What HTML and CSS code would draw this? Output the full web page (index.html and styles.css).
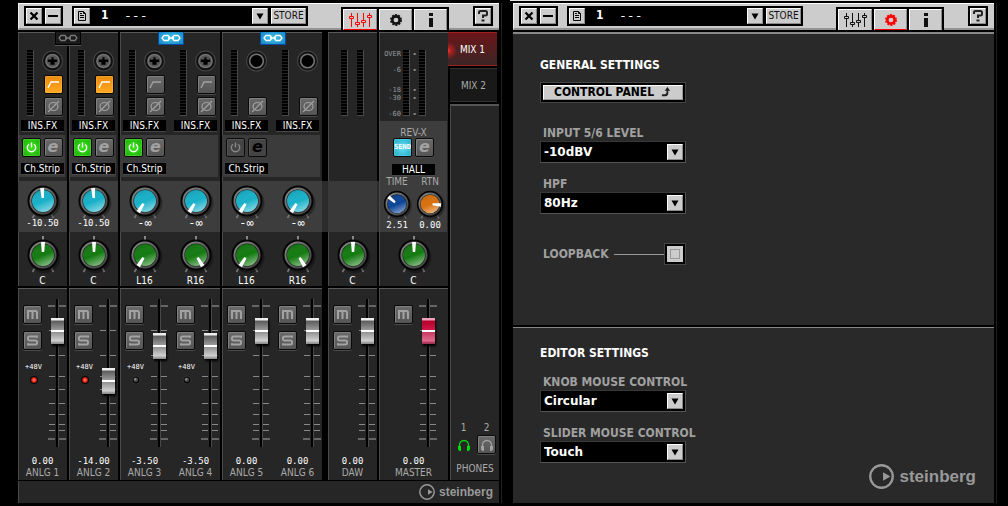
FILE: index.html
```html
<!DOCTYPE html>
<html lang="en">
<head>
<meta charset="utf-8">
<title>Mixer and settings</title>
<link rel="stylesheet" href="styles.css">
</head>
<body>
<svg class="defs" width="0" height="0" aria-hidden="true">
  <defs>
    <linearGradient id="ring" x1="0" y1="0" x2="1" y2="1"><stop offset="0" stop-color="#8c8c8c"/><stop offset="1" stop-color="#3c3c3c"/></linearGradient>
    <linearGradient id="sheen" x1="0.3" y1="0" x2="0.7" y2="1"><stop offset="0" stop-color="#000" stop-opacity=".12"/><stop offset=".5" stop-color="#fff" stop-opacity="0"/><stop offset="1" stop-color="#fff" stop-opacity=".5"/></linearGradient>
    <radialGradient id="glow"><stop offset="0" stop-color="#ff8a70"/><stop offset=".6" stop-color="#f03020"/><stop offset="1" stop-color="#901008"/></radialGradient>
    <symbol id="dial" viewBox="0 0 40 40">
      <path d="M11.5 33.5 9.500 37M28.500 33.500 30.500 37" stroke="#777" stroke-width="1.600"/>
      <circle cx="21.500" cy="22" r="16" fill="#000" opacity=".3"/>
      <circle cx="20" cy="20" r="15.500" fill="#050505"/>
      <circle cx="20" cy="20" r="13.500" fill="url(#ring)"/>
      <circle cx="20" cy="20" r="11.600" fill="#222"/>
      <circle cx="20" cy="20" r="11" fill="currentColor"/>
      <circle cx="20" cy="20" r="11" fill="url(#sheen)"/>
    </symbol>
    <symbol id="needle" viewBox="0 0 40 40"><path d="M18 7h4l-.8 10h-2.400z" fill="#fff"/></symbol>
    <symbol id="link" viewBox="0 0 20 8"><path d="M3 1.500h4l2 2.500-2 2.500H3L1 4zM13 1.500h4L19 4l-2 2.500h-4L11 4zM7 4h6" fill="none" stroke="currentColor" stroke-width="1.300"/></symbol>
    <symbol id="jack" viewBox="0 0 20 20"><circle cx="10" cy="10" r="9.500" fill="#111" stroke="#484848"/><circle cx="10" cy="10" r="7" fill="#707070"/><circle cx="10" cy="10" r="5.500" fill="#555"/><path d="M9 6.500h2v2h3.500v2.500H12v2.500H8V11H5.500V8.500H9z" fill="#000"/></symbol>
    <symbol id="jack-combo" viewBox="0 0 20 20"><circle cx="10" cy="10" r="9.500" fill="#111" stroke="#484848"/><circle cx="10" cy="10" r="6.500" fill="#000" stroke="#747474" stroke-width="1.500"/></symbol>
    <symbol id="hpf" viewBox="0 0 17 17"><path d="M3 12 6 6h8" fill="none" stroke="currentColor" stroke-width="1.400"/></symbol>
    <symbol id="phase" viewBox="0 0 17 17"><ellipse cx="8.500" cy="8.500" rx="4.500" ry="4" fill="none" stroke="currentColor" stroke-width="1.200"/><path d="M3 14 14 3" stroke="currentColor" stroke-width="1.200"/></symbol>
    <symbol id="power" viewBox="0 0 17 17"><path d="M6 5.200a4.200 4.200 0 1 0 5 0M8.500 3.500v5" fill="none" stroke="currentColor" stroke-width="1.400"/></symbol>
    <symbol id="mute" viewBox="0 0 17 17"><path d="M4 13V5h7.500q1.500 0 1.500 1.500V13M8.500 5v8" fill="none" stroke="currentColor" stroke-width="2"/></symbol>
    <symbol id="solo" viewBox="0 0 17 17"><path d="M13 5.800V4.500H5.500q-1.500 0-1.500 1.500v1q0 1.500 1.500 1.500h6q1.500 0 1.500 1.500v1q0 1.500-1.500 1.500H4v-1.300" fill="none" stroke="currentColor" stroke-width="2"/></symbol>
    <symbol id="led-on" viewBox="0 0 10 10"><circle cx="5" cy="5" r="4" fill="#080808"/><circle cx="5" cy="5" r="3" fill="url(#glow)"/></symbol>
    <symbol id="led-off" viewBox="0 0 10 10"><circle cx="5" cy="5" r="4" fill="#080808" stroke="#444" stroke-width=".6"/><circle cx="4.800" cy="4.800" r="2.300" fill="#4c4c4c"/><circle cx="4.200" cy="4.200" r="1" fill="#999"/></symbol>
    <symbol id="rail" viewBox="0 0 18 148">
      <path d="M8 0h2v148H8z" fill="#000"/><path d="M10 0h1v148h-1z" fill="#484848"/>
      <path d="M0 7h7M11 7h7M0 140h7M11 140h7" stroke="#666" stroke-width="2"/>
      <path d="M1 31.500h6M11 31.500h6M1 56.500h6M11 56.500h6M1 77.500h6M11 77.500h6M1 90.500h6M11 90.500h6M1 104.500h6M11 104.500h6M1 115.500h6M11 115.500h6M1 125.500h6M11 125.500h6M1 131.500h6M11 131.500h6" stroke="#888"/>
    </symbol>
    <symbol id="close" viewBox="0 0 16 16"><path d="m4.500 4.500 7 7M11.500 4.500l-7 7" stroke="#000" stroke-width="2.200"/></symbol>
    <symbol id="minimize" viewBox="0 0 16 16"><path d="M3 8h10" stroke="#000" stroke-width="2"/></symbol>
    <symbol id="file" viewBox="0 0 16 16"><path d="M4.500 3.500h5l2 2v7h-7zM9.500 3.500v2h2M6 7.500h4M6 9.500h4M6 5.500h2" fill="none" stroke="#000"/></symbol>
    <symbol id="arrow" viewBox="0 0 16 16"><path d="M4 5h8l-4 7z" fill="#000"/></symbol>
    <symbol id="mixer" viewBox="0 0 24 16"><path d="M3.500 1v14M9.500 1v14M15.500 1v14M21.500 1v14" stroke="currentColor"/><path d="M1.500 4.500h4v2h-4zM7.500 10.500h4v2h-4zM13.500 8.500h4v2h-4zM19.500 3.500h4v2h-4z" fill="#ccc" stroke="currentColor"/></symbol>
    <symbol id="gear" viewBox="0 0 16 16"><circle cx="8" cy="8" r="4.200" fill="none" stroke="currentColor" stroke-width="3"/><circle cx="8" cy="8" r="5.900" fill="none" stroke="currentColor" stroke-width="1.800" stroke-dasharray="2.300 1.407"/></symbol>
    <symbol id="info" viewBox="0 0 12 14"><path d="M4 0h4v3H4zM4 5h4v9H4z" fill="currentColor"/></symbol>
    <symbol id="help" viewBox="0 0 16 16"><path d="M4 6V4.500q0-1.500 1.500-1.500h5Q12 3 12 4.500V6q0 1.500-1.500 1.500H8V10" fill="none" stroke="#222" stroke-width="2"/><path d="M6.500 11.500h3v2h-3z" fill="#222"/></symbol>
    <symbol id="phones" viewBox="0 0 14 14"><path d="M2.500 9V7a4.500 4.500 0 0 1 9 0v2" fill="none" stroke="currentColor" stroke-width="1.300"/><path d="M1 8h3v5H2.500L1 11.500zM13 8h-3v5h1.500l1.500-1.500z" fill="currentColor"/></symbol>
    <symbol id="brand" viewBox="0 0 24 24"><circle cx="12" cy="12" r="10.800" fill="none" stroke="currentColor" stroke-width="2.200"/><path d="M13.500 8v8l7-4z" fill="currentColor"/></symbol>
    <symbol id="jump" viewBox="0 0 12 12"><path d="M1 10h4q3 0 3-4V4h2L7 0 4 4h2v2q0 2-2 2H1z" fill="#222"/></symbol>
  </defs>
</svg>

<main class="window">
  <header class="bar">
    <div class="well"><button class="key" aria-label="Close"><svg><use href="#close"/></svg></button><button class="key" aria-label="Minimize"><svg><use href="#minimize"/></svg></button></div>
    <div class="well preset"><button class="key" aria-label="Library"><svg><use href="#file"/></svg></button><span class="number">1</span><span class="pick"><select aria-label="Preset"><option>---</option></select><svg class="key"><use href="#arrow"/></svg></span><button class="key store">STORE</button></div>
    <nav class="tabs"><button class="tab on" aria-label="Mixer"><svg class="wide"><use href="#mixer"/></svg></button><button class="tab" aria-label="Settings"><svg><use href="#gear"/></svg></button><button class="tab" aria-label="Information"><svg><use href="#info"/></svg></button></nav>
    <div class="well"><button class="key" aria-label="Help"><svg><use href="#help"/></svg></button></div>
  </header>

  <div class="mixer">
    <section class="column linked">
      <button class="link between" aria-label="Link 1 and 2"><svg><use href="#link"/></svg></button>
      <div class="upper">
        <div class="channel">
          <div class="input"><i class="meter"></i><div class="stack"><svg class="jack"><use href="#jack"/></svg><button class="btn amber" aria-label="HPF"><svg><use href="#hpf"/></svg></button><button class="btn" aria-label="Phase"><svg><use href="#phase"/></svg></button></div></div>
          <button class="slot">INS.FX</button>
          <div class="insert"><div class="pair"><button class="btn green" aria-label="Insert on"><svg><use href="#power"/></svg></button><button class="btn edit">e</button></div><button class="slot">Ch.Strip</button></div>
          <div class="send"><label class="knob teal"><svg><use href="#dial"/><use href="#needle" transform="rotate(-4 20 20)"/></svg><input type="range" aria-label="Send 1" value="49"></label><output>-10.50</output></div>
          <div class="pan"><label class="knob leaf"><svg><path class="tick" d="M20 1v4"/><use href="#dial"/><use href="#needle"/></svg><input type="range" aria-label="Pan 1"></label><output>C</output></div>
        </div>
      </div>
      <div class="lower">
        <div class="channel">
          <div class="strip"><div class="switches"><button class="btn" aria-label="Mute 1"><svg><use href="#mute"/></svg></button><button class="btn" aria-label="Solo 1"><svg><use href="#solo"/></svg></button><span class="phantom">+48V</span><svg class="led"><use href="#led-on"/></svg></div><label class="fader"><svg><use href="#rail"/></svg><input type="range" aria-label="Level 1" max="122" value="103"></label></div>
          <output>0.00</output><h2>ANLG 1</h2>
        </div>
      </div>
    </section>

    <section class="column">
      <div class="upper">
        <div class="channel">
          <div class="input"><i class="meter"></i><div class="stack"><svg class="jack"><use href="#jack"/></svg><button class="btn amber" aria-label="HPF"><svg><use href="#hpf"/></svg></button><button class="btn" aria-label="Phase"><svg><use href="#phase"/></svg></button></div></div>
          <button class="slot">INS.FX</button>
          <div class="insert"><div class="pair"><button class="btn green" aria-label="Insert on"><svg><use href="#power"/></svg></button><button class="btn edit">e</button></div><button class="slot">Ch.Strip</button></div>
          <div class="send"><label class="knob teal"><svg><use href="#dial"/><use href="#needle" transform="rotate(-4 20 20)"/></svg><input type="range" aria-label="Send 2" value="49"></label><output>-10.50</output></div>
          <div class="pan"><label class="knob leaf"><svg><path class="tick" d="M20 1v4"/><use href="#dial"/><use href="#needle"/></svg><input type="range" aria-label="Pan 2"></label><output>C</output></div>
        </div>
      </div>
      <div class="lower">
        <div class="channel">
          <div class="strip"><div class="switches"><button class="btn" aria-label="Mute 2"><svg><use href="#mute"/></svg></button><button class="btn" aria-label="Solo 2"><svg><use href="#solo"/></svg></button><span class="phantom">+48V</span><svg class="led"><use href="#led-on"/></svg></div><label class="fader"><svg><use href="#rail"/></svg><input type="range" aria-label="Level 2" max="122" value="53"></label></div>
          <output>-14.00</output><h2>ANLG 2</h2>
        </div>
      </div>
    </section>

    <section class="column double">
      <button class="link on" aria-label="Link 3 and 4" aria-pressed="true"><svg><use href="#link"/></svg></button>
      <div class="upper">
        <div class="channel">
          <div class="input"><i class="meter"></i><div class="stack"><svg class="jack"><use href="#jack"/></svg><button class="btn" aria-label="HPF"><svg><use href="#hpf"/></svg></button><button class="btn" aria-label="Phase"><svg><use href="#phase"/></svg></button></div></div>
          <button class="slot">INS.FX</button>
          <div class="insert"><div class="pair"><button class="btn green" aria-label="Insert on"><svg><use href="#power"/></svg></button><button class="btn edit">e</button></div><button class="slot">Ch.Strip</button></div>
          <div class="send"><label class="knob teal"><svg><use href="#dial"/><use href="#needle" transform="rotate(-149 20 20)"/></svg><input type="range" aria-label="Send 3" value="0"></label><output class="infinite">-∞</output></div>
          <div class="pan"><label class="knob leaf"><svg><path class="tick" d="M20 1v4"/><use href="#dial"/><use href="#needle" transform="rotate(-149 20 20)"/></svg><input type="range" aria-label="Pan 3" value="0"></label><output>L16</output></div>
        </div>
        <div class="channel">
          <div class="input"><i class="meter"></i><div class="stack"><svg class="jack"><use href="#jack"/></svg><button class="btn" aria-label="HPF"><svg><use href="#hpf"/></svg></button><button class="btn" aria-label="Phase"><svg><use href="#phase"/></svg></button></div></div>
          <button class="slot">INS.FX</button>
          <div class="insert"></div>
          <div class="send"><label class="knob teal"><svg><use href="#dial"/><use href="#needle" transform="rotate(-149 20 20)"/></svg><input type="range" aria-label="Send 4" value="0"></label><output class="infinite">-∞</output></div>
          <div class="pan"><label class="knob leaf"><svg><path class="tick" d="M20 1v4"/><use href="#dial"/><use href="#needle" transform="rotate(149 20 20)"/></svg><input type="range" aria-label="Pan 4" value="100"></label><output>R16</output></div>
        </div>
      </div>
      <div class="lower">
        <div class="channel">
          <div class="strip"><div class="switches"><button class="btn" aria-label="Mute 3"><svg><use href="#mute"/></svg></button><button class="btn" aria-label="Solo 3"><svg><use href="#solo"/></svg></button><span class="phantom">+48V</span><svg class="led"><use href="#led-off"/></svg></div><label class="fader"><svg><use href="#rail"/></svg><input type="range" aria-label="Level 3" max="122" value="88"></label></div>
          <output>-3.50</output><h2>ANLG 3</h2>
        </div>
        <div class="channel">
          <div class="strip"><div class="switches"><button class="btn" aria-label="Mute 4"><svg><use href="#mute"/></svg></button><button class="btn" aria-label="Solo 4"><svg><use href="#solo"/></svg></button><span class="phantom">+48V</span><svg class="led"><use href="#led-off"/></svg></div><label class="fader"><svg><use href="#rail"/></svg><input type="range" aria-label="Level 4" max="122" value="88"></label></div>
          <output>-3.50</output><h2>ANLG 4</h2>
        </div>
      </div>
    </section>

    <section class="column double">
      <button class="link on" aria-label="Link 5 and 6" aria-pressed="true"><svg><use href="#link"/></svg></button>
      <div class="upper">
        <div class="channel">
          <div class="input"><i class="meter"></i><div class="stack"><svg class="jack"><use href="#jack-combo"/></svg><span class="blank"></span><button class="btn" aria-label="Phase"><svg><use href="#phase"/></svg></button></div></div>
          <button class="slot">INS.FX</button>
          <div class="insert"><div class="pair"><button class="btn dim" aria-label="Insert on"><svg><use href="#power"/></svg></button><button class="btn edit dim ink">e</button></div><button class="slot">Ch.Strip</button></div>
          <div class="send"><label class="knob teal"><svg><use href="#dial"/><use href="#needle" transform="rotate(-149 20 20)"/></svg><input type="range" aria-label="Send 5" value="0"></label><output class="infinite">-∞</output></div>
          <div class="pan"><label class="knob leaf"><svg><path class="tick" d="M20 1v4"/><use href="#dial"/><use href="#needle" transform="rotate(-149 20 20)"/></svg><input type="range" aria-label="Pan 5" value="0"></label><output>L16</output></div>
        </div>
        <div class="channel">
          <div class="input"><i class="meter"></i><div class="stack"><svg class="jack"><use href="#jack-combo"/></svg><span class="blank"></span><button class="btn" aria-label="Phase"><svg><use href="#phase"/></svg></button></div></div>
          <button class="slot">INS.FX</button>
          <div class="insert"></div>
          <div class="send"><label class="knob teal"><svg><use href="#dial"/><use href="#needle" transform="rotate(-149 20 20)"/></svg><input type="range" aria-label="Send 6" value="0"></label><output class="infinite">-∞</output></div>
          <div class="pan"><label class="knob leaf"><svg><path class="tick" d="M20 1v4"/><use href="#dial"/><use href="#needle" transform="rotate(149 20 20)"/></svg><input type="range" aria-label="Pan 6" value="100"></label><output>R16</output></div>
        </div>
      </div>
      <div class="lower">
        <div class="channel">
          <div class="strip"><div class="switches"><button class="btn" aria-label="Mute 5"><svg><use href="#mute"/></svg></button><button class="btn" aria-label="Solo 5"><svg><use href="#solo"/></svg></button></div><label class="fader"><svg><use href="#rail"/></svg><input type="range" aria-label="Level 5" max="122" value="103"></label></div>
          <output>0.00</output><h2>ANLG 5</h2>
        </div>
        <div class="channel">
          <div class="strip"><div class="switches"><button class="btn" aria-label="Mute 6"><svg><use href="#mute"/></svg></button><button class="btn" aria-label="Solo 6"><svg><use href="#solo"/></svg></button></div><label class="fader"><svg><use href="#rail"/></svg><input type="range" aria-label="Level 6" max="122" value="103"></label></div>
          <output>0.00</output><h2>ANLG 6</h2>
        </div>
      </div>
    </section>

    <section class="column daw">
      <div class="upper">
        <div class="channel">
          <div class="stereo"><i class="meter"></i><i class="meter"></i></div>
          <div class="send"></div>
          <div class="pan"><label class="knob leaf"><svg><path class="tick" d="M20 1v4"/><use href="#dial"/><use href="#needle"/></svg><input type="range" aria-label="Pan DAW"></label><output>C</output></div>
        </div>
      </div>
      <div class="lower">
        <div class="channel">
          <div class="strip"><div class="switches"><button class="btn" aria-label="Mute DAW"><svg><use href="#mute"/></svg></button><button class="btn" aria-label="Solo DAW"><svg><use href="#solo"/></svg></button></div><label class="fader"><svg><use href="#rail"/></svg><input type="range" aria-label="Level DAW" max="122" value="103"></label></div>
          <output>0.00</output><h2>DAW</h2>
        </div>
      </div>
    </section>

    <section class="column master">
      <div class="upper">
        <div class="channel">
          <div class="scale"><span>OVER</span><span>-6</span><span>-18</span><span>-30</span><span>-60</span><i class="meter"></i><b>-</b><b>-</b><b>-</b><b>-</b><b>-</b><i class="meter right"></i></div>
          <div class="reverb">
            <h3>REV-X</h3>
            <div class="pair"><button class="btn cyan">SEND</button><button class="btn edit">e</button></div>
            <button class="slot">HALL</button>
            <div class="duo">
              <div class="mini"><h3>TIME</h3><label class="knob navy"><svg viewBox="0 0 40 40"><use href="#dial"/><use href="#needle" transform="rotate(-50 20 20)"/></svg><input type="range" aria-label="Time" value="33"></label><output>2.51</output></div>
              <div class="mini"><h3>RTN</h3><label class="knob rust"><svg viewBox="0 0 40 40"><use href="#dial"/><use href="#needle" transform="rotate(95 20 20)"/></svg><input type="range" aria-label="Return" value="82"></label><output>0.00</output></div>
            </div>
          </div>
          <div class="pan"><label class="knob leaf"><svg><path class="tick" d="M20 1v4"/><use href="#dial"/><use href="#needle"/></svg><input type="range" aria-label="Pan master"></label><output>C</output></div>
        </div>
      </div>
      <div class="lower">
        <div class="channel">
          <div class="strip"><div class="switches"><button class="btn" aria-label="Mute master"><svg><use href="#mute"/></svg></button></div><label class="fader red"><svg><use href="#rail"/></svg><input type="range" aria-label="Level master" max="122" value="103"></label></div>
          <output>0.00</output><h2>MASTER</h2>
        </div>
      </div>
    </section>

    <aside class="side">
      <button class="mix on" aria-pressed="true">MIX 1</button>
      <button class="mix">MIX 2</button>
      <div class="phones">
        <div class="outs"><label for="ph1">1</label><label for="ph2">2</label><button id="ph1" class="out"><svg><use href="#phones"/></svg></button><button id="ph2" class="btn"><svg><use href="#phones"/></svg></button></div>
        <h2>PHONES</h2>
      </div>
    </aside>
  </div>
  <footer class="foot"><svg><use href="#brand"/></svg><span>steinberg</span></footer>
</main>

<main class="window settings">
  <header class="bar">
    <div class="well"><button class="key" aria-label="Close"><svg><use href="#close"/></svg></button><button class="key" aria-label="Minimize"><svg><use href="#minimize"/></svg></button></div>
    <div class="well preset"><button class="key" aria-label="Library"><svg><use href="#file"/></svg></button><span class="number">1</span><span class="pick"><select aria-label="Preset"><option>---</option></select><svg class="key"><use href="#arrow"/></svg></span><button class="key store">STORE</button></div>
    <nav class="tabs"><button class="tab" aria-label="Mixer"><svg class="wide"><use href="#mixer"/></svg></button><button class="tab on" aria-label="Settings"><svg><use href="#gear"/></svg></button><button class="tab" aria-label="Information"><svg><use href="#info"/></svg></button></nav>
    <div class="well"><button class="key" aria-label="Help"><svg><use href="#help"/></svg></button></div>
  </header>
  <section class="group general">
    <h1>GENERAL SETTINGS</h1>
    <button class="panel-button"><span>CONTROL PANEL <svg><use href="#jump"/></svg></span></button>
    <div class="field"><label for="level">INPUT 5/6 LEVEL</label><span class="pick"><select id="level"><option>-10dBV</option></select><svg class="key"><use href="#arrow"/></svg></span></div>
    <div class="field"><label for="hpf-freq">HPF</label><span class="pick"><select id="hpf-freq"><option>80Hz</option></select><svg class="key"><use href="#arrow"/></svg></span></div>
    <div class="loopback"><label for="loop">LOOPBACK</label><i></i><input id="loop" type="checkbox"></div>
  </section>
  <section class="group editor">
    <h1>EDITOR SETTINGS</h1>
    <div class="field"><label for="knob-mode">KNOB MOUSE CONTROL</label><span class="pick"><select id="knob-mode"><option>Circular</option></select><svg class="key"><use href="#arrow"/></svg></span></div>
    <div class="field"><label for="slider-mode">SLIDER MOUSE CONTROL</label><span class="pick"><select id="slider-mode"><option>Touch</option></select><svg class="key"><use href="#arrow"/></svg></span></div>
    <div class="brand"><svg><use href="#brand"/></svg><span>steinberg</span></div>
  </section>
</main>
</body>
</html>
```
FILE: styles.css
```css
* { box-sizing: border-box; }
body {
  margin: 0;
  padding: 3px 14px 3px 18px;
  min-height: 100vh;
  display: flex;
  gap: 14px;
  background: #000;
  color: #fff;
  font: 10px/11px "DejaVu Sans Condensed", "DejaVu Sans", sans-serif;
}
button, select, input { margin: 0; padding: 0; border: 0; font: inherit; color: inherit; }
h1, h2, h3 { margin: 0; font: inherit; }
svg { display: block; }
.defs { position: absolute; }

.window {
  position: relative;
  flex: 1;
  min-width: 0;
  display: flex;
  flex-direction: column;
  box-shadow: 2px 0 0 #000, 3px 0 0 #202020;
}
.settings::before {
  content: "";
  position: absolute;
  top: -3px;
  left: -3px;
  width: 77%;
  height: 1px;
  background: #e4e4e4;
}

/* title bar */
.bar {
  height: 27px;
  margin-bottom: 2px;
  padding: 2px 6px 0;
  display: flex;
  align-items: flex-start;
  gap: 9px;
  background: #ccc;
  border-top: 1px solid #fff;
  border-left: 1px solid #eee;
  border-bottom: 2px solid #949494;
}
.bar > .well:first-child { margin-left: -1px; }
.well { display: flex; gap: 3px; padding: 2px; background: #000; }
.key {
  width: 16px;
  height: 16px;
  background: #ccc;
  border: 1px solid;
  border-color: #fff #8c8c8c #8c8c8c #fff;
  flex: none;
}
.key > svg { width: 16px; height: 16px; margin: -1px; }
.preset { flex: 0 1 236px; }
.number { width: 20px; padding-left: 8px; font: bold 12px/15px "DejaVu Sans Condensed", sans-serif; }
.key.store { width: 35px; color: #111; font-size: 10px; line-height: 14px; }
.tabs { margin-left: auto; margin-right: 15px; display: flex; gap: 2px; margin-top: 1px; padding: 2px 2px 0; background: #000; }
.tab {
  width: 33px;
  height: 21px;
  display: grid;
  place-items: center;
  background: #ccc;
  border: 1px solid;
  border-color: #fff #8c8c8c #ccc #fff;
  color: #111;
}
.tab:first-child { width: 34px; }
.tab svg { width: 16px; height: 14px; }
.tab svg.wide { width: 24px; height: 16px; }
.tab.on { color: #f00; border-bottom-color: #f00; }

/* drop-downs */
.pick { position: relative; display: flex; height: 22px; padding: 2px; background: #000; border: 1px solid; border-color: #383838 #555 #555 #383838; }
.pick select {
  flex: 1;
  appearance: none;
  background: #000;
  outline: 0;
  padding-left: 1px;
  font: bold 12px/14px "DejaVu Sans", sans-serif;
}
.pick .key { pointer-events: none; }
.preset .pick { flex: 1; height: 16px; border: 0; padding: 0; }
.preset .pick select { padding-left: 8px; font: 13px/14px "DejaVu Sans Mono", monospace; }

/* mixer */
.mixer {
  flex: 1;
  display: grid;
  grid-template-columns: 49fr 49fr 100fr 100fr 53fr 69fr 49fr;
  gap: 2px;
}
.column { position: relative; display: flex; flex-direction: column; gap: 2px; }
.upper, .lower {
  display: grid;
  background: #262626;
  border-top: 1px solid #5a5a5a;
  box-shadow: inset 1px 0 0 #4a4a4a;
}
.lower { flex: 1; }
.double .upper, .double .lower { grid-template-columns: 1fr 1fr; column-gap: 2px; }
.daw { padding-left: 4px; }
.channel { display: flex; flex-direction: column; align-items: center; min-width: 0; }

.link {
  position: absolute;
  z-index: 1;
  top: 0;
  left: 50%;
  width: 26px;
  height: 13px;
  margin-left: -12px;
  display: grid;
  place-items: center;
  background: #1a1a1a;
  border: 1px solid #000;
  border-top: 0;
  color: #777;
  box-shadow: 0 1px 0 #555;
}
.link.between { left: 100%; }
.link svg { width: 20px; height: 8px; }
.link.on { background: radial-gradient(#44c8e8, #1583c8); border-color: #0a4a9c; color: #fff; box-shadow: none; }

.input { display: flex; gap: 10px; width: 36px; margin: 17px 0 4px 4px; }
.meter {
  width: 7px;
  height: 66px;
  background: repeating-linear-gradient(#000 0 2px, #202020 2px 3px);
  border: solid #4a4a4a;
  border-width: 0 1px 1px 0;
}
.stack { display: flex; flex-direction: column; gap: 3px; }
.jack { width: 21px; height: 22px; margin-left: -2px; }
.blank { height: 19px; }
.btn {
  width: 19px;
  height: 19px;
  display: grid;
  place-items: center;
  background: linear-gradient(#6a6a6a, #555);
  border: 1px solid #0a0a0a;
  border-radius: 2px;
  box-shadow: inset 1px 1px 0 #808080, 0 1px 0 #4a4a4a;
  color: #a2a2a2;
}
.btn svg { width: 17px; height: 17px; }
.amber { background: linear-gradient(#e88a10, #ffa820); box-shadow: inset 0 0 2px #fc6; color: #fff; }
.green { background: radial-gradient(#3ee81c, #18a808); box-shadow: inset 0 0 2px #8f6; color: #fff; }
.cyan { background: radial-gradient(#6ee4f4, #1aa6c4); box-shadow: inset 0 0 2px #8ef; color: #fff; font: bold 7px/9px "DejaVu Sans Mono", monospace; }
.dim { background: #444; box-shadow: inset 1px 1px 0 #555; color: #888; }
.edit { font: italic bold 16px/15px "DejaVu Sans", sans-serif; padding-bottom: 3px; }
.edit.ink { color: #000; }
.slot {
  width: 43px;
  height: 11px;
  background: #000;
  line-height: 11px;
  text-align: center;
  white-space: nowrap;
  box-shadow: 0 1px 0 #484848;
}
.insert {
  align-self: stretch;
  height: 42px;
  margin: 4px 0;
  padding-top: 3px;
  display: flex;
  flex-direction: column;
  align-items: center;
  gap: 6px;
  background: #3b3b3b;
}
.column:not(.double) .insert { margin-left: 1px; margin-right: 2px; }
.double .channel:first-child .insert { box-shadow: 2px 0 0 #3b3b3b; }
.double .channel:last-child .insert { margin-right: 2px; }
.pair { display: flex; gap: 3px; }
.send, .pan { align-self: stretch; display: flex; flex-direction: column; align-items: center; }
.send { height: 51px; background: #3d3d3d; }
.double .channel:first-child .send { box-shadow: 2px 0 0 #3d3d3d; }
.daw .send { background: #393939; box-shadow: -6px 0 0 #2b2b2b, 2px 0 0 #2b2b2b; }
.pan { height: 54px; padding-top: 3px; }
output { font: 9px/10px "DejaVu Sans Mono", monospace; white-space: nowrap; }
output.infinite { font-size: 12px; }
.send output { margin-top: -3px; }
.pan output { font: inherit; line-height: 11px; }
.knob { position: relative; }
.knob svg { width: 40px; height: 40px; }
.knob input { position: absolute; inset: 0; width: 100%; height: 100%; opacity: 0; }
.tick { stroke: #888; stroke-width: 2; }
.teal { color: #17b0c8; }
.leaf { color: #137a10; }
.navy { color: #0c4496; }
.rust { color: #d8700c; }

.stereo { display: flex; gap: 9px; margin: 17px 0 65px; }
.scale {
  display: grid;
  grid-auto-flow: column;
  grid-template-rows: 8px 16px 20px 8px 16px;
  grid-template-columns: 17px 7px 5px 7px;
  column-gap: 2px;
  margin: 17px 17px 3px 0;
  font: 7px/8px "DejaVu Sans Mono", monospace;
  color: #999;
}
.scale span, .scale b { align-self: end; text-align: right; }
.scale b { text-align: center; color: #ccc; }
.scale .meter { grid-row: 1 / 6; }
.reverb {
  align-self: stretch;
  margin: 0 1px;
  padding: 6px 0 2px;
  display: flex;
  flex-direction: column;
  align-items: center;
  background: #3d3d3d;
  color: #aaa;
}
.reverb .slot { margin: 7px 0 2px; color: #fff; }
.duo { display: flex; gap: 1px; color: #aaa; }
.mini { width: 32px; display: flex; flex-direction: column; align-items: center; }
.mini h3 { line-height: 10px; }
.mini svg { width: 34px; height: 34px; margin: 0 -1px; }
.mini output { color: #fff; margin-top: -1px; }

.strip { display: flex; gap: 6px; width: 43px; margin: 10px 0 9px 4px; }
.switches { width: 19px; padding-top: 6px; display: flex; flex-direction: column; align-items: center; gap: 7px; }
.phantom { margin: 6px -5px 0 -3px; font: 7px/8px "DejaVu Sans Mono", monospace; }
.led { width: 10px; height: 10px; margin: -3px 0 0 3px; }
.fader { position: relative; width: 18px; height: 148px; }
.fader svg { width: 18px; height: 148px; }
.fader input {
  position: absolute;
  inset: 0;
  width: 18px;
  height: 148px;
  appearance: none;
  background: none;
  writing-mode: vertical-lr;
  direction: rtl;
}
.fader input::-webkit-slider-thumb {
  appearance: none;
  width: 13px;
  height: 26px;
  background: linear-gradient(#eee 0 2px, #5c5c5c 3px, #9a9a9a 12px, #fff 12px 14px, #909090 14px, #d2d2d2 23px, #aaa 24px, #888);
  box-shadow: 1px 2px 2px #000;
}
.fader.red input::-webkit-slider-thumb {
  background: linear-gradient(#f0a0b8 0 2px, #b4002c 3px, #d01848 12px, #fff 12px 14px, #c83860 14px, #e06c90 23px, #c04068 24px, #903050);
}
.lower h2 { color: #aaa; line-height: 12px; margin-top: 1px; white-space: nowrap; }

.side { display: flex; flex-direction: column; gap: 2px; }
.mix {
  height: 34px;
  margin: 0 2px 0 0;
  background: #191919;
  border-bottom: 1px solid #333;
  border-top: 1px solid #333;
  color: #aaa;
}
.mix.on {
  margin-left: -2px;
  background: radial-gradient(circle at 0 55%, #f33 0, #a22 3px, transparent 9px), linear-gradient(#6a1618, #3c2626);
  border-color: #a02020;
  color: #fff;
}
.phones {
  flex: 1;
  display: flex;
  flex-direction: column;
  justify-content: flex-end;
  align-items: center;
  gap: 9px;
  padding-bottom: 6px;
  background: #262626;
  border-top: 2px solid #555;
  border-left: 1px solid #4a4a4a;
  color: #aaa;
}
.outs { display: grid; grid-template-columns: 19px 19px; gap: 2px 4px; text-align: center; }
.out { width: 19px; height: 19px; display: grid; place-items: center; background: none; color: #0d0; }
.outs svg { width: 14px; height: 14px; }

.foot, .brand {
  display: flex;
  align-items: center;
  justify-content: flex-end;
  color: #999;
  font: bold 12px/16px "Liberation Sans", sans-serif;
}
.foot { height: 22px; margin-top: 1px; padding-right: 6px; gap: 4px; background: #262626; border-left: 1px solid #4a4a4a; }
.foot svg { width: 16px; height: 16px; }

/* settings */
.group { position: relative; padding: 0 27px; background: #292929; border-top: 2px solid #888; }
.general { height: 293px; }
.editor { flex: 1; margin-top: 2px; border-top-width: 1px; }
.group h1 { font: bold 12px/14px "DejaVu Sans Condensed", sans-serif; }
.general h1 { margin: 24px 0 10px; }
.editor h1 { margin: 18px 0 16px; }
.panel-button { display: block; width: 146px; height: 21px; padding: 2px; background: #000; border: 1px solid #444; }
.panel-button span {
  display: flex;
  align-items: center;
  justify-content: center;
  gap: 7px;
  height: 15px;
  background: #ccc;
  border: 1px solid;
  border-color: #fff #999 #999 #fff;
  color: #000;
  font: bold 12px/13px "DejaVu Sans Condensed", sans-serif;
}
.panel-button svg { width: 11px; height: 11px; }
.field { width: 146px; display: flex; flex-direction: column; gap: 1px; margin-bottom: 15px; }
.panel-button + .field { margin-top: 24px; }
.field label, .loopback label {
  margin-left: 3px;
  color: #a0a0a0;
  font: bold 12px/13px "DejaVu Sans Condensed", sans-serif;
  white-space: nowrap;
}
.loopback { width: 146px; height: 22px; margin-top: 29px; display: flex; align-items: center; gap: 5px; }
.loopback i { flex: 1; height: 1px; margin-right: -5px; background: #999; }
.loopback input {
  appearance: none;
  width: 22px;
  height: 22px;
  display: grid;
  place-items: center;
  background: linear-gradient(#ccc, #ccc) center / 16px 16px no-repeat #000;
  border: 1px solid #444;
}
.loopback input::before { content: ""; width: 8px; height: 8px; border: 1px solid #999; }
.brand { position: absolute; right: 18px; bottom: 14px; gap: 5px; font-size: 17px; line-height: 24px; }
.brand svg { width: 25px; height: 25px; }
```
